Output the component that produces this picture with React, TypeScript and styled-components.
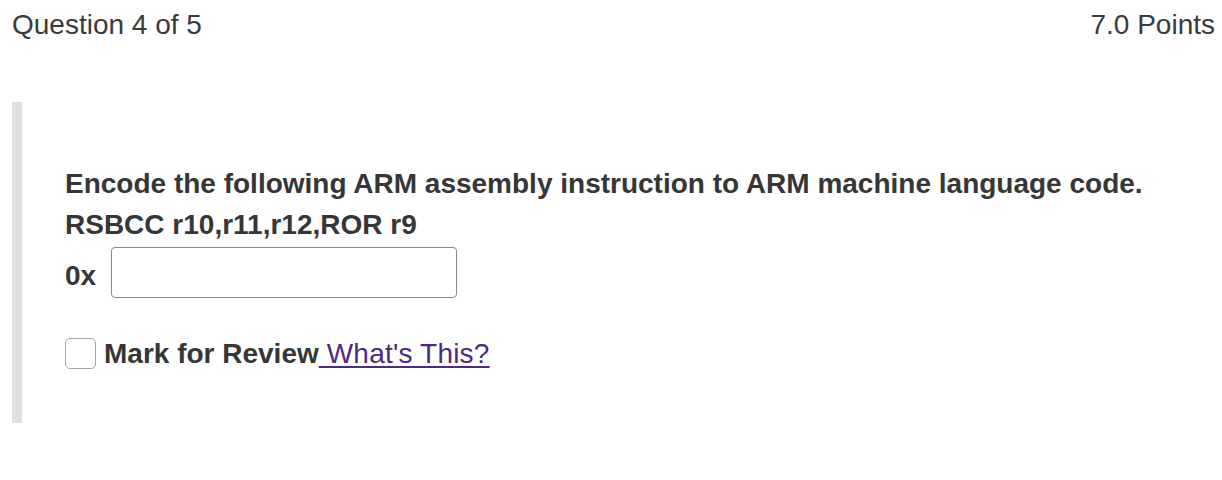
import React from "react";
import styled, { createGlobalStyle } from "styled-components";

const GlobalStyle = createGlobalStyle`
  html, body {
    margin: 0;
    padding: 0;
    background: #ffffff;
  }
  body {
    font-family: "Liberation Sans", Arial, sans-serif;
    color: #333333;
  }
`;

const Page = styled.div`
  width: 1222px;
  height: 480px;
  box-sizing: border-box;
  padding: 11px 7px 0 12px;
`;

const Header = styled.div`
  display: flex;
  justify-content: space-between;
  align-items: center;
  font-size: 28px;
  line-height: 28px;
  color: #3a3a3a;
`;

const Body = styled.div`
  margin-top: 63px;
  display: flex;
`;

const SideBar = styled.div`
  width: 10px;
  height: 321px;
  background: #e0e0e0;
  flex: none;
`;

const Content = styled.div`
  padding: 61px 0 0 43px;
  color: #363636;
  font-weight: bold;
  font-size: 28px;
  line-height: 41px;
`;

const Line = styled.p`
  margin: 0;
`;

const AnswerRow = styled.div`
  display: flex;
  align-items: center;
  gap: 15px;
  margin-top: 2px;
`;

const Prefix = styled.span`
  margin-top: 6px;
`;

const AnswerInput = styled.input`
  width: 346px;
  height: 51px;
  box-sizing: border-box;
  border: 1.5px solid #8a8a8a;
  border-radius: 4px;
  background: #fff;
  font: inherit;
`;

const ReviewRow = styled.label`
  display: flex;
  align-items: center;
  gap: 8px;
  margin-top: 35px;
`;

const Box = styled.span`
  width: 31px;
  height: 31px;
  box-sizing: border-box;
  border: 1.5px solid #a5a5a5;
  border-radius: 5px;
  background: #fff;
  flex: none;
`;

const ReviewText = styled.span`
  font-weight: bold;
  color: #363636;
`;

const HelpLink = styled.a`
  font-weight: normal;
  color: #4b2a85;
  text-decoration: underline;
  text-underline-offset: 3px;
  letter-spacing: 0.2px;
  white-space: pre;
`;

export default function App() {
  return (
    <Page>
      <GlobalStyle />
      <Header>
        <span>Question 4 of 5</span>
        <span>7.0 Points</span>
      </Header>
      <Body>
        <SideBar />
        <Content>
          <Line>Encode the following ARM assembly instruction to ARM machine language code.</Line>
          <Line>RSBCC r10,r11,r12,ROR r9</Line>
          <AnswerRow>
            <Prefix>0x</Prefix>
            <AnswerInput type="text" />
          </AnswerRow>
          <ReviewRow>
            <Box />
            <ReviewText>
              Mark for Review<HelpLink href="#"> What's This?</HelpLink>
            </ReviewText>
          </ReviewRow>
        </Content>
      </Body>
    </Page>
  );
}
